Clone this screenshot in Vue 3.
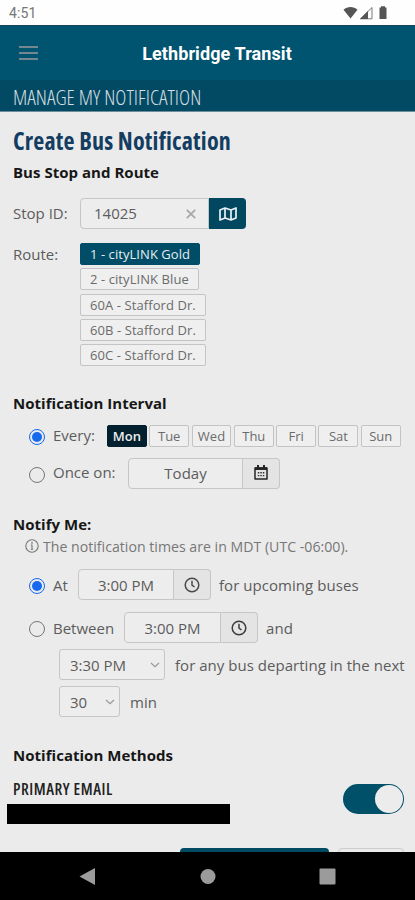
<script setup>
import { ref } from 'vue'

const routes = ['1 - cityLINK Gold', '2 - cityLINK Blue', '60A - Stafford Dr.', '60B - Stafford Dr.', '60C - Stafford Dr.']
const days = ['Mon', 'Tue', 'Wed', 'Thu', 'Fri', 'Sat', 'Sun']
const route = ref(0)
const day = ref(0)
</script>

<template>
  <div class="screen">
    <div class="status">
      <span class="clock">4:51</span>
      <svg width="48" height="16" viewBox="0 0 48 16">
        <path d="M0.5 4.8C4.5 1 10.500 1 14.500 4.800L7.500 13.500Z" fill="#555" />
        <path d="M17.500 13.800L29 2.500V13.800Z" fill="none" stroke="#777" />
        <path d="M17 14L25 6V14Z" fill="#555" />
        <path d="M38 2.500V1.200h4V2.500h1.500V14h-7V2.500Z" fill="#555" />
      </svg>
    </div>
    <header class="appbar">
      <div class="burger"><i></i><i></i><i></i></div>
      <span class="title">Lethbridge Transit</span>
    </header>
    <div class="subbar"><span>MANAGE MY NOTIFICATION</span></div>

    <main class="content">
      <h1><span>Create Bus Notification</span></h1>
      <h2>Bus Stop and Route</h2>

      <div class="row stop">
        <span class="label">Stop ID:</span>
        <div class="group">
          <div class="field stop-field">
            <span>14025</span>
            <svg width="10" height="10" viewBox="0 0 10 10" fill="none" stroke="#a8a8a8" stroke-width="1.8"><path d="M0.800 0.800L9.200 9.200M9.200 0.800L0.800 9.200" /></svg>
          </div>
          <div class="map">
            <svg width="18" height="14" viewBox="0 0 18 14" fill="none" stroke="#e9f1f4" stroke-width="1.700" stroke-linejoin="round"><path d="M1 3L6 1L12 3L17 1V11L12 13L6 11L1 13ZM6 1V11M12 3V13" /></svg>
          </div>
        </div>
      </div>

      <div class="routes">
        <span class="label">Route:</span>
        <div class="chips">
          <button v-for="(r, i) in routes" :key="r" class="chip" :class="{ on: route === i }" @click="route = i">{{ r }}</button>
        </div>
      </div>

      <h2 class="h-interval">Notification Interval</h2>
      <div class="row every">
        <i class="radio on"></i>
        <span class="every-label">Every:</span>
        <div class="days">
          <button v-for="(d, i) in days" :key="d" class="day" :class="{ on: day === i }" @click="day = i">{{ d }}</button>
        </div>
      </div>
      <div class="row once">
        <i class="radio"></i>
        <span class="once-label">Once on:</span>
        <div class="group">
          <div class="field today">Today</div>
          <div class="addon cal">
            <svg width="14" height="15" viewBox="0 0 14 15"><path d="M1 3H13V14H1Z" fill="none" stroke="#252525" stroke-width="1.500" stroke-linejoin="round" /><path d="M1 2.300H13V5H1ZM3 0H5V3H3ZM9 0H11V3H9Z" fill="#252525" /><path d="M3.800 7h1.500v1.500h-1.500ZM6.300 7h1.500v1.500h-1.500ZM8.800 7h1.500v1.500H8.800ZM3.800 10h1.500v1.300h-1.500ZM6.300 10h1.500v1.300h-1.500ZM8.800 10h1.500v1.300H8.800Z" fill="#333" /></svg>
          </div>
        </div>
      </div>

      <h2 class="h-notify">Notify Me:</h2>
      <div class="info">
        <svg width="14" height="14" viewBox="0 0 14 14"><circle cx="7" cy="7" r="6.200" fill="none" stroke="#777" stroke-width="1.100" /><path d="M7 5.800V10.500M5.800 10.300H8.200M5.800 6H7" fill="none" stroke="#777" stroke-width="1.100" /><circle cx="7" cy="3.800" r="0.900" fill="#777" /></svg>
        <span>The notification times are in MDT (UTC -06:00).</span>
      </div>

      <div class="row at">
        <i class="radio on"></i>
        <span class="at-label">At</span>
        <div class="group">
          <div class="field time-at">3:00 PM</div>
          <div class="addon clk">
            <svg width="16" height="16" viewBox="0 0 16 16" fill="none" stroke="#4a4a4a" stroke-width="1.500"><circle cx="8" cy="8" r="6.800" /><path d="M8 3.800V8.200L10.500 10" /></svg>
          </div>
        </div>
        <span class="after">for upcoming buses</span>
      </div>
      <div class="row between">
        <i class="radio"></i>
        <span class="between-label">Between</span>
        <div class="group">
          <div class="field time-btw">3:00 PM</div>
          <div class="addon clk">
            <svg width="16" height="16" viewBox="0 0 16 16" fill="none" stroke="#3c3c3c" stroke-width="1.500"><circle cx="8" cy="8" r="6.800" /><path d="M8 3.800V8.200L10.500 10" /></svg>
          </div>
        </div>
        <span class="after">and</span>
      </div>
      <div class="row sel first">
        <div class="select wide"><span>3:30 PM</span><svg width="10" height="6" viewBox="0 0 10 6" fill="none" stroke="#999" stroke-width="1.200"><path d="M1 1L5 4.600L9 1" /></svg></div>
        <span class="tail">for any bus departing in the next</span>
      </div>
      <div class="row sel">
        <div class="select narrow"><span>30</span><svg width="10" height="6" viewBox="0 0 10 6" fill="none" stroke="#999" stroke-width="1.200"><path d="M1 1L5 4.600L9 1" /></svg></div>
        <span class="tail">min</span>
      </div>

      <h2 class="h-methods">Notification Methods</h2>
      <div class="method">
        <div class="email">
          <h3><span>PRIMARY EMAIL</span></h3>
          <div class="redacted"></div>
        </div>
        <div class="toggle"><i></i></div>
      </div>
      <div class="actions"><div class="primary"></div><div class="secondary"></div></div>
    </main>

    <nav class="nav">
      <svg width="415" height="48" viewBox="0 0 415 48" fill="#9b9b9b"><path d="M79.500 24.500L95 16V33Z" /><circle cx="208" cy="24.500" r="7.500" /><rect x="319.500" y="16.500" width="16" height="16" rx="1" /></svg>
    </nav>
  </div>
</template>

<style>
body { margin: 0; background: #ebebeb; }
</style>

<style scoped>
.screen { width: 415px; height: 900px; display: flex; flex-direction: column; overflow: hidden; background: #ebebeb; color: #5c5c5c; font-family: "Open Sans", "Noto Sans", sans-serif; font-size: 15px; }
.screen * { box-sizing: border-box; }
.screen span, h1, h2, h3 { white-space: nowrap; }
.status { height: 25px; flex: none; background: #fefefe; display: flex; justify-content: space-between; align-items: center; padding: 0 24px 0 9px; }
.clock { font-family: Roboto, sans-serif; font-size: 14px; color: #777; letter-spacing: 0.1px; padding-top: 1px; }
.appbar { height: 55px; flex: none; background: #01546f; border-top: 1px solid #17465b; display: grid; grid-template-columns: 1fr auto 1fr; align-items: center; padding: 0 0 0 19px; }
.burger { width: 19px; display: grid; gap: 4px; }
.burger i { height: 2px; background: #748791; }
.title { font-family: Roboto, sans-serif; font-weight: 700; font-size: 18px; letter-spacing: 0.1px; color: #fff; }
.appbar::after { content: ""; width: 20px; }
.subbar { height: 32px; flex: none; background: #024a63; border-bottom: 1px solid #6d8e9b; padding: 3px 0 0 13px; line-height: 28px; color: #d4dde0; font-size: 21px; font-weight: 300; font-stretch: 75%; letter-spacing: 0.030px; }
.content { flex: 1; min-height: 0; overflow: hidden; }
h1, h2, h3 { margin: 0; padding-left: 13px; }
h1 { height: 36px; margin-top: 11px; line-height: 36px; font-size: 24px; font-weight: 700; font-stretch: 75%; letter-spacing: 0.18px; color: #133d61; }
h2 { height: 20px; line-height: 19px; font-size: 15px; font-weight: 700; color: #171717; margin-top: 4px; letter-spacing: 0.030px; }
.row { display: flex; align-items: center; height: 31px; }
.row span { padding-bottom: 2px; }
.stop { margin-top: 15px; padding-left: 13px; }
.label { width: 67px; flex: none; }
.group { display: flex; height: 31px; }
.field { border: 1px solid #c6c6c6; border-radius: 4px 0 0 4px; display: flex; align-items: center; justify-content: center; background: #ededed; color: #5c5c5c; padding-bottom: 1px; }
.stop-field { width: 129px; justify-content: space-between; padding: 0 12px 0 13px; }
.map { width: 37px; background: #014760; border-radius: 0 4px 4px 0; display: grid; place-items: center; }
.routes { display: flex; margin-top: 14px; padding-left: 13px; height: 124px; }
.routes .label { line-height: 23px; }
.chips { display: flex; flex-direction: column; align-items: flex-start; gap: 3.300px; }
button { font-family: inherit; margin: 0; white-space: nowrap; }
.chip, .day { height: 22px; border: 1px solid #c4c4c4; border-radius: 2px; background: #efefef; color: #6b6b6b; font-size: 13px; line-height: 20px; padding: 0 9px; }
.chip { letter-spacing: 0.080px; }
.chip.on { background: #014d67; border-color: #014d67; color: #e5eef1; font-weight: 500; letter-spacing: 0.060px; }
.h-interval { margin-top: 27px; }
.every { height: 23px; margin-top: 10px; padding-left: 29px; }
.radio { width: 16px; height: 16px; flex: none; border: 1px solid #777; border-radius: 50%; display: grid; place-items: center; margin-top: 3px; }
.radio.on { border-color: #1769ee; }
.radio.on::after { content: ""; width: 10px; height: 10px; border-radius: 50%; background: #1769ee; }
.every-label { width: 54px; margin-left: 8px; }
.days { display: flex; gap: 2.500px; }
.day { width: 39.800px; padding: 0; text-align: center; }
.day.on { background: #03202f; border-color: #03202f; color: #eee; font-weight: 600; }
.once { margin-top: 10px; padding-left: 29px; height: 32px; }
.once-label { width: 75px; margin-left: 8px; }
.today { width: 115px; }
.addon { width: 37px; border: 1px solid #c6c6c6; border-left: 0; border-radius: 0 4px 4px 0; background: #e4e4e4; display: grid; place-items: center; }
.cal { padding-bottom: 1px; }
.h-notify { margin-top: 26px; }
.info { display: flex; align-items: center; gap: 4px; height: 20px; margin-top: 1px; padding-left: 25px; font-size: 14.150px; color: #777; }
.at { margin-top: 13px; padding-left: 29px; }
.at span, .between span { padding-bottom: 0; }
.at-label { width: 25px; margin-left: 8px; }
.time-at, .time-btw { padding-bottom: 0; }
.time-at { width: 96px; }
.after { margin-left: 8px; letter-spacing: 0.050px; }
.between { margin-top: 12px; padding-left: 29px; }
.between-label { width: 71px; margin-left: 8px; }
.time-btw { width: 97px; }
.sel { margin-top: 6px; padding-left: 59px; }
.sel span { padding-bottom: 0; }
.select { height: 31px; border: 1px solid #c6c6c6; border-radius: 3px; background: #ededed; display: flex; align-items: center; justify-content: space-between; padding: 0 4px 0 10px; }
.wide { width: 106px; }
.narrow { width: 61px; }
.tail { margin-left: 10px; letter-spacing: 0.030px; }
.h-methods { margin-top: 29px; }
.method { display: flex; justify-content: space-between; margin-top: 13px; padding-right: 11px; height: 46px; }
h3 { height: 20px; line-height: 20px; font-size: 16px; font-weight: 600; font-stretch: 75%; letter-spacing: 0.550px; color: #222; }
.redacted { width: 223px; height: 20px; margin: 5px 0 0 7.400px; background: #000; }
.toggle { width: 61px; height: 30px; margin-top: 5px; border-radius: 15px; background: #01506a; display: flex; justify-content: flex-end; padding: 1px; }
.toggle i { width: 28px; height: 28px; border-radius: 50%; background: #ececec; }
.actions { display: flex; gap: 9px; justify-content: flex-end; margin-top: 23px; padding-right: 11px; }
.primary { width: 149px; height: 30px; border-radius: 4px; background: #014a64; }
.secondary { width: 66px; height: 30px; border-radius: 4px; border: 1px solid #ccc; }
.nav { height: 48px; flex: none; background: #000; }
.nav svg { display: block; }
</style>
